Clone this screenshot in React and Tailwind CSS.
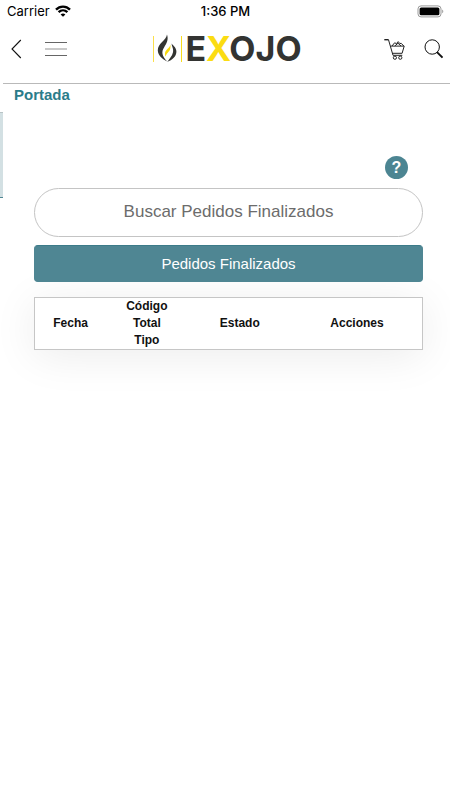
import { useState } from 'react'

function StatusBar() {
  return (
    <div className="grid h-[22px] grid-cols-3 items-center pl-[7px] pr-[6px] font-['Inter',sans-serif] text-[13px] leading-5 text-black">
      <div className="flex items-center gap-[5px]">
        <span>Carrier</span>
        <svg width="16" height="12" viewBox="0 0 16 12" fill="none" stroke="#000" strokeWidth="2.4">
          <path d="M1 4.6C5 .6 11 .6 15 4.6" />
          <path d="M3.6 7.2c2.6-2.5 6.2-2.5 8.8 0" />
          <path d="M8 11.8 5.6 9.4c1.4-1.3 3.4-1.3 4.8 0z" fill="#000" stroke="none" />
        </svg>
      </div>
      <span className="text-center font-medium">1:36 PM</span>
      <svg className="justify-self-end" width="27" height="13" viewBox="0 0 27 13">
        <rect x="1" y=".9" width="23" height="11" rx="3" fill="#fff" stroke="#999" />
        <rect x="2.6" y="2.5" width="19.8" height="7.8" rx="1.6" fill="#000" />
        <path d="M25.3 4.6c1.3.5 1.3 3.1 0 3.6z" fill="#888" />
      </svg>
    </div>
  )
}

function Logo() {
  return (
    <a href="#inicio" aria-label="Exojo" className="flex h-[30px] items-center gap-[3px]">
      <svg width="31" height="30" viewBox="0 0 31 30">
        <path d="M2.5 2v26" stroke="#fbdf4a" strokeWidth="1" />
        <path d="M30.5 2v26" stroke="#f9dc1c" strokeWidth="1" />
        <path
          d="M16 .6C15.4 6.4 6.6 9.4 6.8 16.6c.2 5 4.6 8.6 9.4 11-5.4-6-6-9.800-3-14.400C15.400 9.800 17.800 6 16 .6z"
          fill="#333432"
        />
        <path
          d="M20.600 9.600c.2 3.400 2.200 5 1.400 8.600-.8 3.800-3.600 6.600-5.800 9.800 5.200-2 9.200-5.800 9.200-10.200 0-3.800-2.800-5.800-4.800-8.200z"
          fill="#333432"
        />
        <path d="M19.400 10.800c-.8 3.400-4.800 4.600-5.400 8.200-.2 1.600 0 2.600.6 3.600.6-3.400 3.800-4.600 4.600-7.600.4-1.400.4-2.800.2-4.200z" fill="#f8d90f" />
      </svg>
      <span className="font-['Inter',sans-serif] text-[34px] leading-[30px] font-bold text-[#333432]">
        E<span className="text-[#fbdc12]">X</span>OJO
      </span>
    </a>
  )
}

function Header() {
  return (
    <header className="ml-[3px] grid h-[62px] grid-cols-[1fr_auto_1fr] items-center border-b border-[#b9b9b9] pb-[7px]">
      <div className="flex items-center gap-[22px] pl-[7px]">
        <button aria-label="Volver">
          <svg width="12" height="20" viewBox="0 0 12 20" fill="none" stroke="#111" strokeWidth="1.1">
            <path d="M10.8 1 2 10l8.8 9" />
          </svg>
        </button>
        <button aria-label="Menú">
          <svg width="24" height="16" viewBox="0 0 24 16">
            <path d="M1 1.5h22M1 14.5h22" stroke="#666" />
            <path d="M1 8h22" stroke="#c9c9c9" strokeWidth="2" />
          </svg>
        </button>
      </div>
      <Logo />
      <div className="flex items-center justify-end gap-[18px] pr-[7px]">
        <button aria-label="Carrito">
          <svg width="22" height="22" viewBox="0 0 22 22" fill="none" stroke="#222" strokeWidth="1">
            <path d="M.3 1.700h4.300" strokeWidth="1.400" />
            <path d="M4.500 1.800 9 17.300h9.300" />
            <path d="M6.600 8.100h13.600l-2.100 7.200H8.500" />
            <path d="M8 8l2.600-3.200 1.800.8L14.200 3.600l1.600 2 1.400-.3L19.800 8M10.800 8l3.200-2.800L17 8" />
            <circle cx="10.900" cy="19.700" r="1.600" />
            <circle cx="16.300" cy="19.700" r="1.600" />
          </svg>
        </button>
        <button aria-label="Buscar">
          <svg width="19" height="20" viewBox="0 0 19 20" fill="none" stroke="#111">
            <circle cx="8.200" cy="8" r="7.200" strokeWidth="1" />
            <path d="m13 13.200 5.500 5.500" strokeWidth="1.9" />
          </svg>
        </button>
      </div>
    </header>
  )
}

export default function App() {
  const [search, setSearch] = useState('')

  return (
    <div className="min-h-screen bg-white font-['Liberation_Sans',Arial,sans-serif]">
      <StatusBar />
      <Header />
      <div className="flex">
        {/* edge of the closed side menu */}
        <aside className="w-[3px] shrink-0 pt-[28px]">
          <div className="h-[86px] border-t border-b border-t-[#b9c4c6] border-b-[#4f8693] bg-[#d3e0e3]" />
        </aside>
        <main className="min-w-0 flex-1 pl-[11px]">
          <a href="#portada" className="mt-px block w-fit text-[15px] leading-5 font-bold text-[#2b7c8a]">
            Portada
          </a>
          <div className="mt-[51px] flex flex-col pr-[27px] pl-[20px]">
            <button
              aria-label="Ayuda"
              className="mr-[15px] flex size-[23px] items-center justify-center self-end rounded-full bg-[#4c8592] text-[16px] leading-5 font-bold text-white"
            >
              ?
            </button>
            <input
              type="text"
              aria-label="Buscar Pedidos Finalizados"
              placeholder="Buscar Pedidos Finalizados"
              value={search}
              onChange={(e) => setSearch(e.target.value)}
              className="mt-[9px] h-[49px] w-full rounded-full border border-[#c4c4c4] bg-white px-4 pb-px text-center text-[17px] text-[#555] placeholder:text-[#6c6c6c] focus:outline-none"
            />
            <button className="relative z-10 mt-[8px] h-[37px] w-full rounded-[4px] border border-[#4f8693] border-t-[#3c7b89] bg-[#4f8693] text-[15px] leading-5 text-white">
              Pedidos Finalizados
            </button>
            <table className="mt-[15px] w-full table-fixed border-separate border-spacing-0 border border-[#c6c6c6] bg-white text-[12px] leading-[17px] text-[#111] shadow-[0_6px_44px_rgba(0,0,0,0.08)]">
              <thead>
                <tr>
                  <th className="w-[18.4%]">Fecha</th>
                  <th className="w-[21%]">
                    Código
                    <br />
                    Total
                    <br />
                    Tipo
                  </th>
                  <th className="w-[27%]">Estado</th>
                  <th>Acciones</th>
                </tr>
              </thead>
            </table>
          </div>
        </main>
      </div>
    </div>
  )
}
